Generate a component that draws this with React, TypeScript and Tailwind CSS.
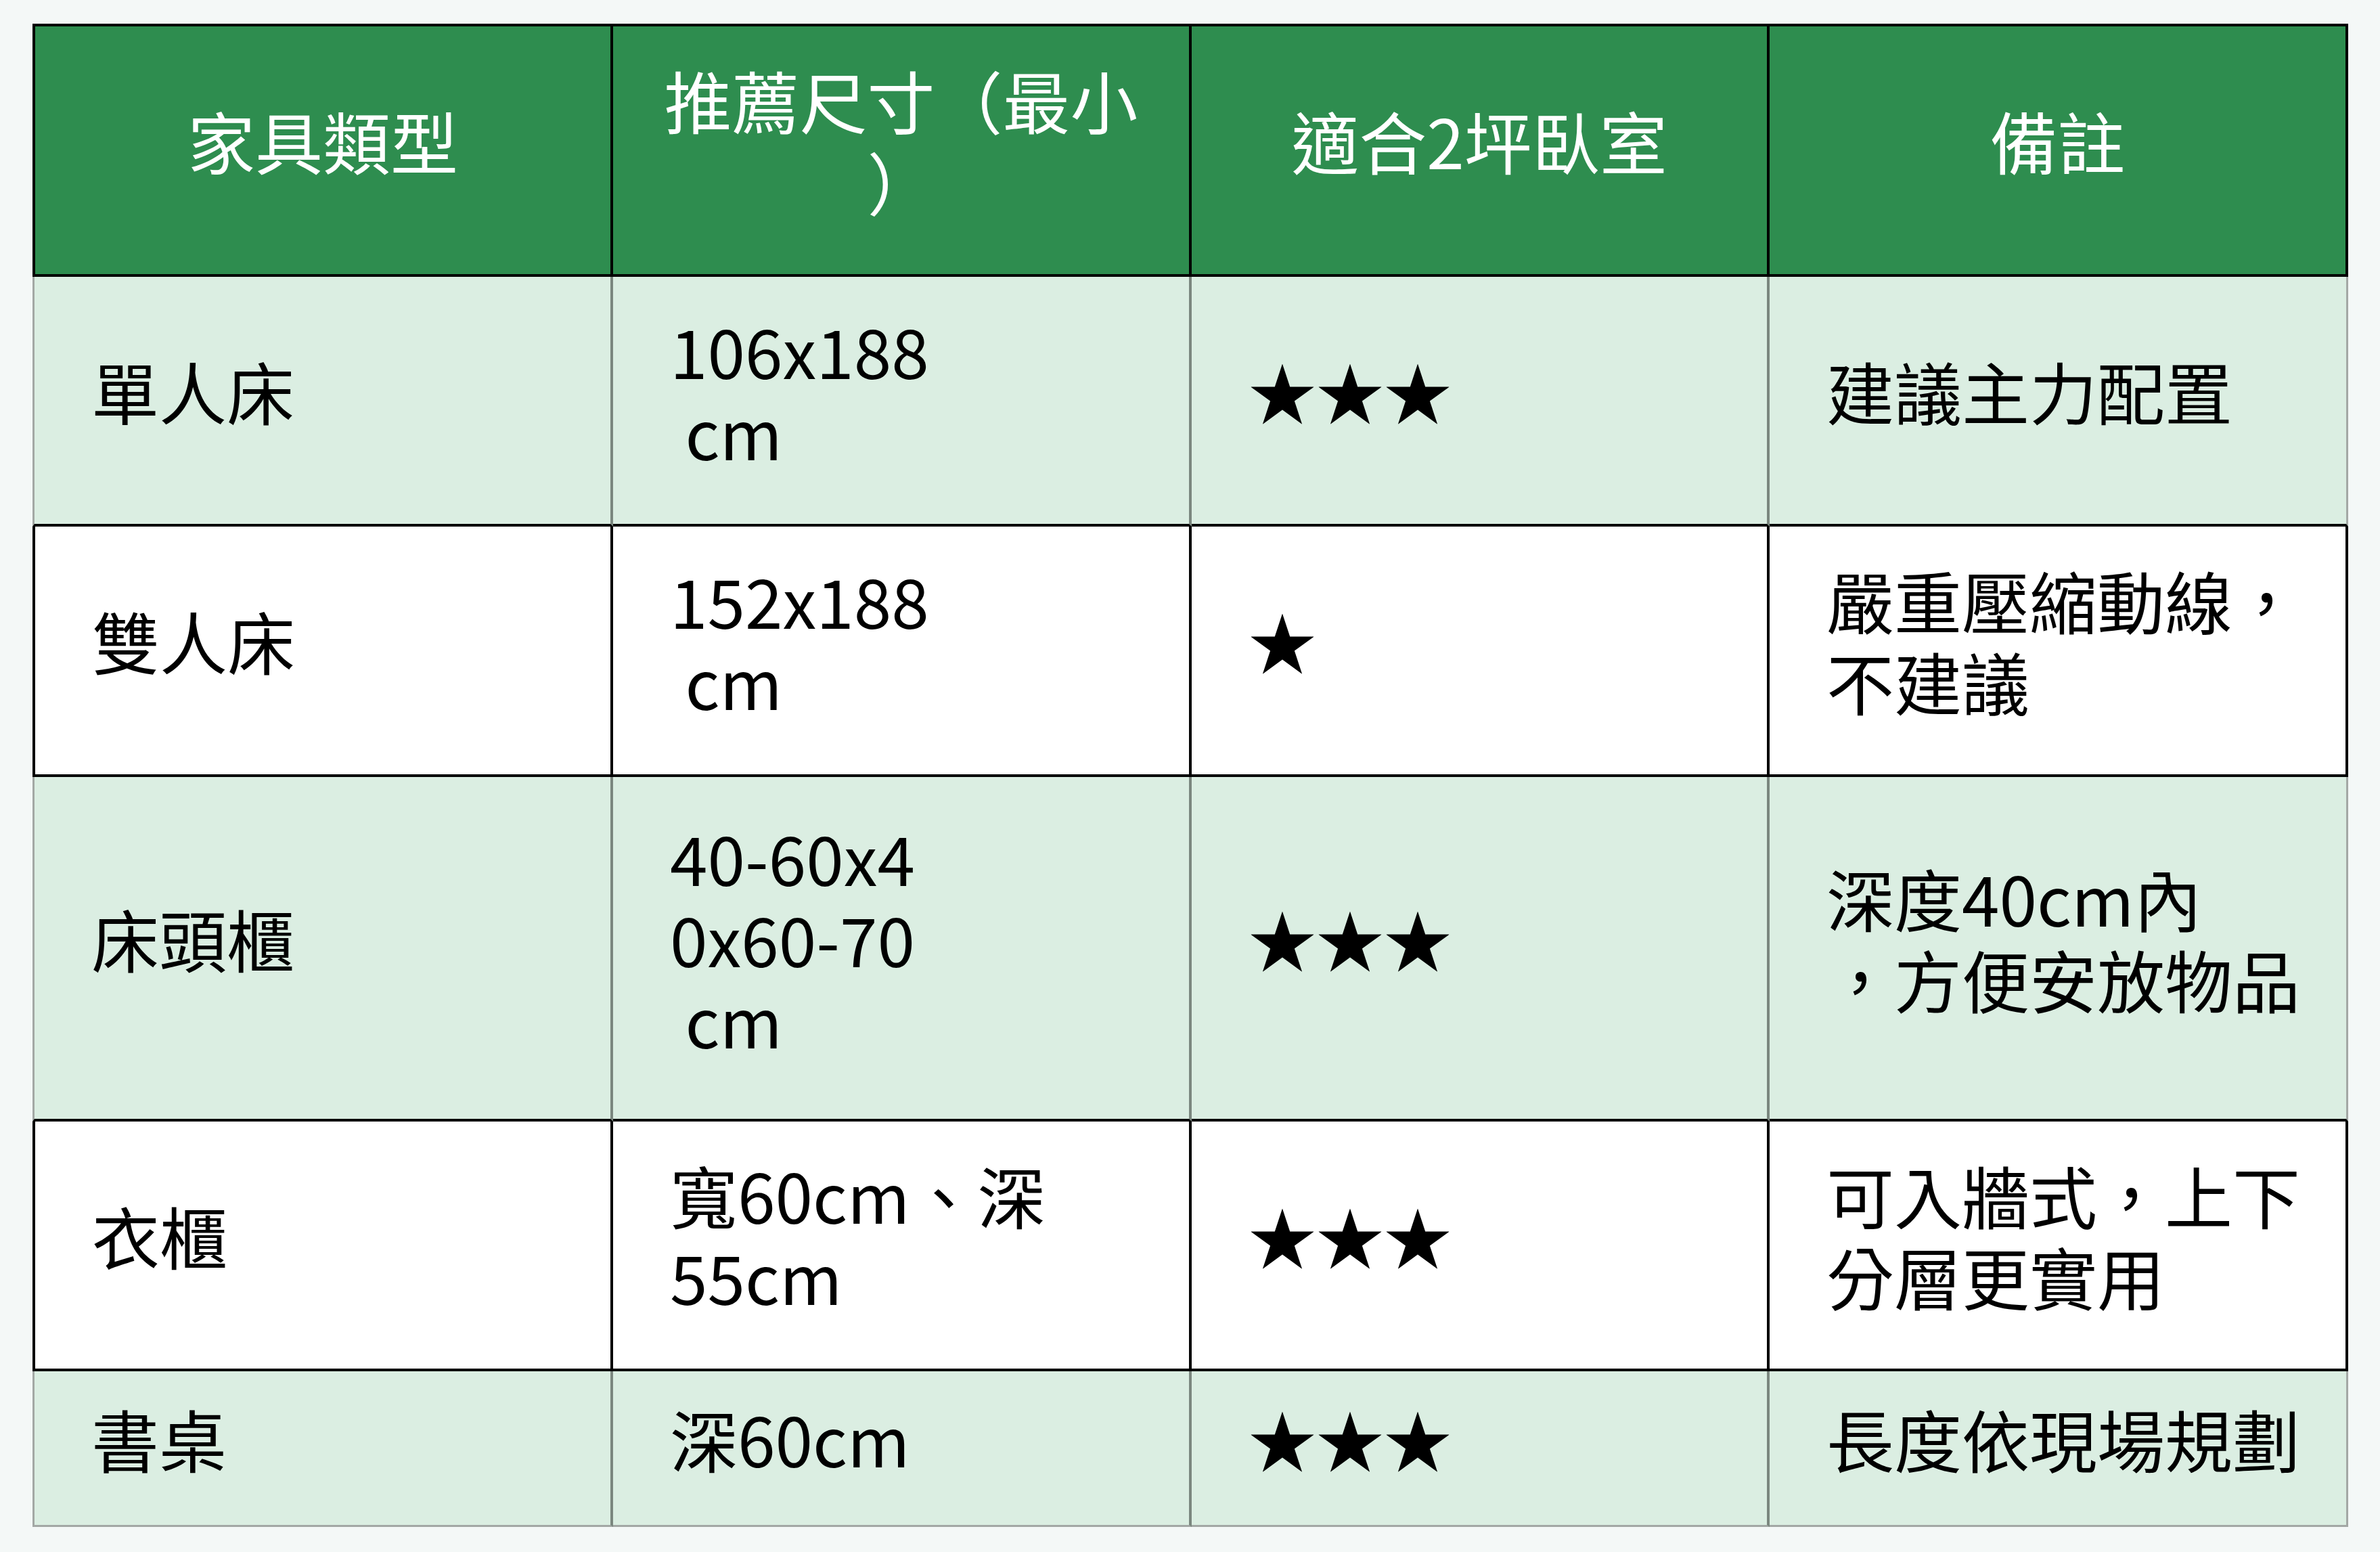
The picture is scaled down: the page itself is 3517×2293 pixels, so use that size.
import React from "react";

type Row = {
  name: string;
  size: string[];
  stars: string;
  note: string[];
  light: boolean;
  h: string;
};

const rows: Row[] = [
  { name: "單人床", size: ["106x188", "\u00a0cm"], stars: "★★★", note: ["建議主力配置"], light: true, h: "h-[369px]" },
  { name: "雙人床", size: ["152x188", "\u00a0cm"], stars: "★", note: ["嚴重壓縮動線，", "不建議"], light: false, h: "h-[370px]" },
  { name: "床頭櫃", size: ["40-60x4", "0x60-70", "\u00a0cm"], stars: "★★★", note: ["深度40cm內", "，方便安放物品"], light: true, h: "h-[509px]" },
  { name: "衣櫃", size: ["寬60cm、深", "55cm"], stars: "★★★", note: ["可入牆式，上下", "分層更實用"], light: false, h: "h-[369px]" },
  { name: "書桌", size: ["深60cm"], stars: "★★★", note: ["長度依現場規劃"], light: true, h: "h-[230px]" },
];

const headers: string[][] = [["家具類型"], ["推薦尺寸（最小", "）"], ["適合2坪臥室"], ["備註"]];

function Lines({ lines }: { lines: string[] }) {
  return (
    <>
      {lines.map((l, i) => (
        <div key={i} className="whitespace-nowrap">{l}</div>
      ))}
    </>
  );
}

function cellClass(row: Row, col: number, last: boolean) {
  const base = "px-[84px] pb-[30px] align-middle text-left text-black";
  if (!row.light) {
    return `${base} bg-white border-r-4 border-b-4 border-black ${col === 0 ? "border-l-4" : ""}`;
  }
  const left = col === 0 ? "border-l-[3px] border-l-[#a3a8a5]" : "";
  const right = col === 3 ? "border-r-[3px] border-r-[#a3a8a5]" : "border-r-4 border-r-[#7b877f]";
  const bottom = last ? "border-b-[3px] border-b-[#a3a8a5]" : "border-b-4 border-b-black";
  return `${base} bg-[#dbeee2] ${left} ${right} ${bottom}`;
}

export default function App() {
  return (
    <div
      className="min-h-screen w-full bg-[#f4f8f7] pl-[48px] pt-[35px]"
      style={{ fontFamily: '"Noto Sans CJK TC", "Noto Sans", sans-serif' }}
    >
      <table className="w-[3422px] table-fixed border-separate border-spacing-0 text-[100px] leading-[120px] font-normal">
        <colgroup>
          <col className="w-[858px]" />
          <col className="w-[855px]" />
          <col className="w-[854px]" />
          <col className="w-[855px]" />
        </colgroup>
        <thead>
          <tr className="h-[374px]">
            {headers.map((h, i) => (
              <th
                key={i}
                className={`bg-[#2e8d4f] px-[40px] pb-[30px] text-center align-middle font-normal text-white border-t-4 border-b-4 border-r-4 border-black ${i === 0 ? "border-l-4" : ""}`}
              >
                <Lines lines={h} />
              </th>
            ))}
          </tr>
        </thead>
        <tbody>
          {rows.map((r, ri) => {
            const last = ri === rows.length - 1;
            return (
              <tr key={r.name} className={r.h}>
                <td className={cellClass(r, 0, last)}>{r.name}</td>
                <td className={cellClass(r, 1, last)}>
                  <Lines lines={r.size} />
                </td>
                <td className={cellClass(r, 2, last)}>{r.stars}</td>
                <td className={cellClass(r, 3, last)}>
                  <Lines lines={r.note} />
                </td>
              </tr>
            );
          })}
        </tbody>
      </table>
    </div>
  );
}
